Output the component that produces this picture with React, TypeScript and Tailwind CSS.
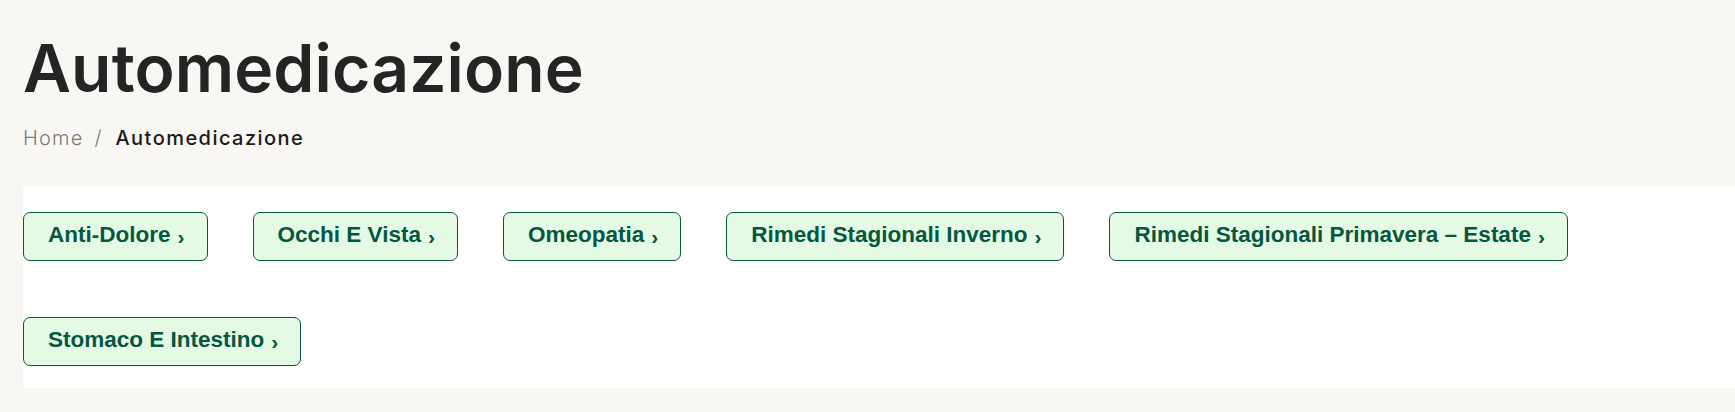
import React from "react";

const cats = [
  "Anti-Dolore",
  "Occhi E Vista",
  "Omeopatia",
  "Rimedi Stagionali Inverno",
  "Rimedi Stagionali Primavera – Estate",
  "Stomaco E Intestino",
];

export default function App() {
  return (
    <div className="min-h-[412px] w-full bg-[#f8f7f4] pl-[23px] overflow-hidden">
      <h1 className="pt-[28px] text-[66px] leading-[80px] font-semibold text-[#242424] [font-family:Inter,'Noto_Sans',sans-serif] tracking-[0.1px]">
        Automedicazione
      </h1>
      <nav className="mt-[18px] flex items-center text-[20px] leading-[24px] [font-family:Inter,'Noto_Sans',sans-serif]">
        <span className="text-[#7a7a7a] font-light tracking-[1.2px]">Home</span>
        <span className="ml-[11px] mr-[14px] text-[#7a7a7a] font-light">/</span>
        <span className="text-[#1a1a1a] font-medium tracking-[1.45px]">Automedicazione</span>
      </nav>
      <div className="mt-[36px] bg-white pt-[26px] pb-[22px]">
        <div className="flex flex-wrap gap-x-[45px] gap-y-[56px]">
          {cats.map((c) => (
            <a
              key={c}
              className="block h-[49px] rounded-[7px] border border-[#07573f] bg-[#e5fae5] pl-[24px] pr-[22px] pt-[8px] pb-[12px] text-[22.5px] leading-[27px] font-bold text-[#05573f] whitespace-nowrap [font-family:'Liberation_Sans',Arial,sans-serif]"
            >
              {c}
              <span className="relative top-[2px] ml-[7px] text-[21px]">›</span>
            </a>
          ))}
        </div>
      </div>
    </div>
  );
}
